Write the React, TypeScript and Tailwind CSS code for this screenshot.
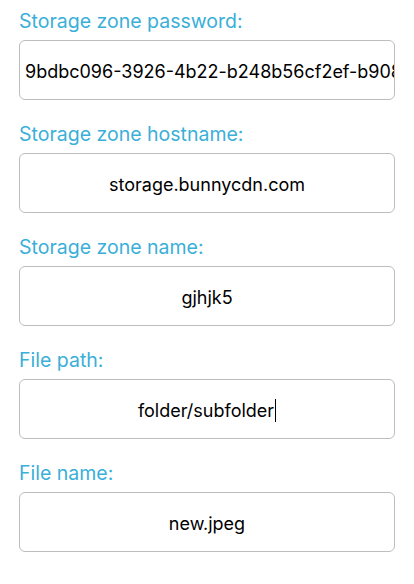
const fields = [
  { label: "Storage zone password:", value: "9bdbc096-3926-4b22-b248b56cf2ef-b908", overflow: true },
  { label: "Storage zone hostname:", value: "storage.bunnycdn.com" },
  { label: "Storage zone name:", value: "gjhjk5" },
  { label: "File path:", value: "folder/subfolder", caret: true },
  { label: "File name:", value: "new.jpeg" },
];

export default function App() {
  return (
    <div className="min-h-screen bg-white px-[19px] pt-[7px] font-['Inter','Liberation_Sans',sans-serif]">
      <div className="flex w-[376px] flex-col gap-[20px]">
        {fields.map((f) => (
          <div key={f.label} className="flex flex-col gap-[5px]">
            <label className="text-[19.5px] leading-[28px] text-[#3aafd8]">{f.label}</label>
            <div
              className={`flex h-[60px] items-center overflow-hidden whitespace-nowrap rounded-[6px] border border-[#bdbdbd] bg-white px-[5px] pt-[2px] text-[18px] text-black ${
                f.overflow ? "justify-start" : "justify-center"
              }`}
            >
              <span>{f.value}</span>
              {f.caret && <span className="ml-px inline-block h-[23px] w-px bg-black" />}
            </div>
          </div>
        ))}
      </div>
    </div>
  );
}
